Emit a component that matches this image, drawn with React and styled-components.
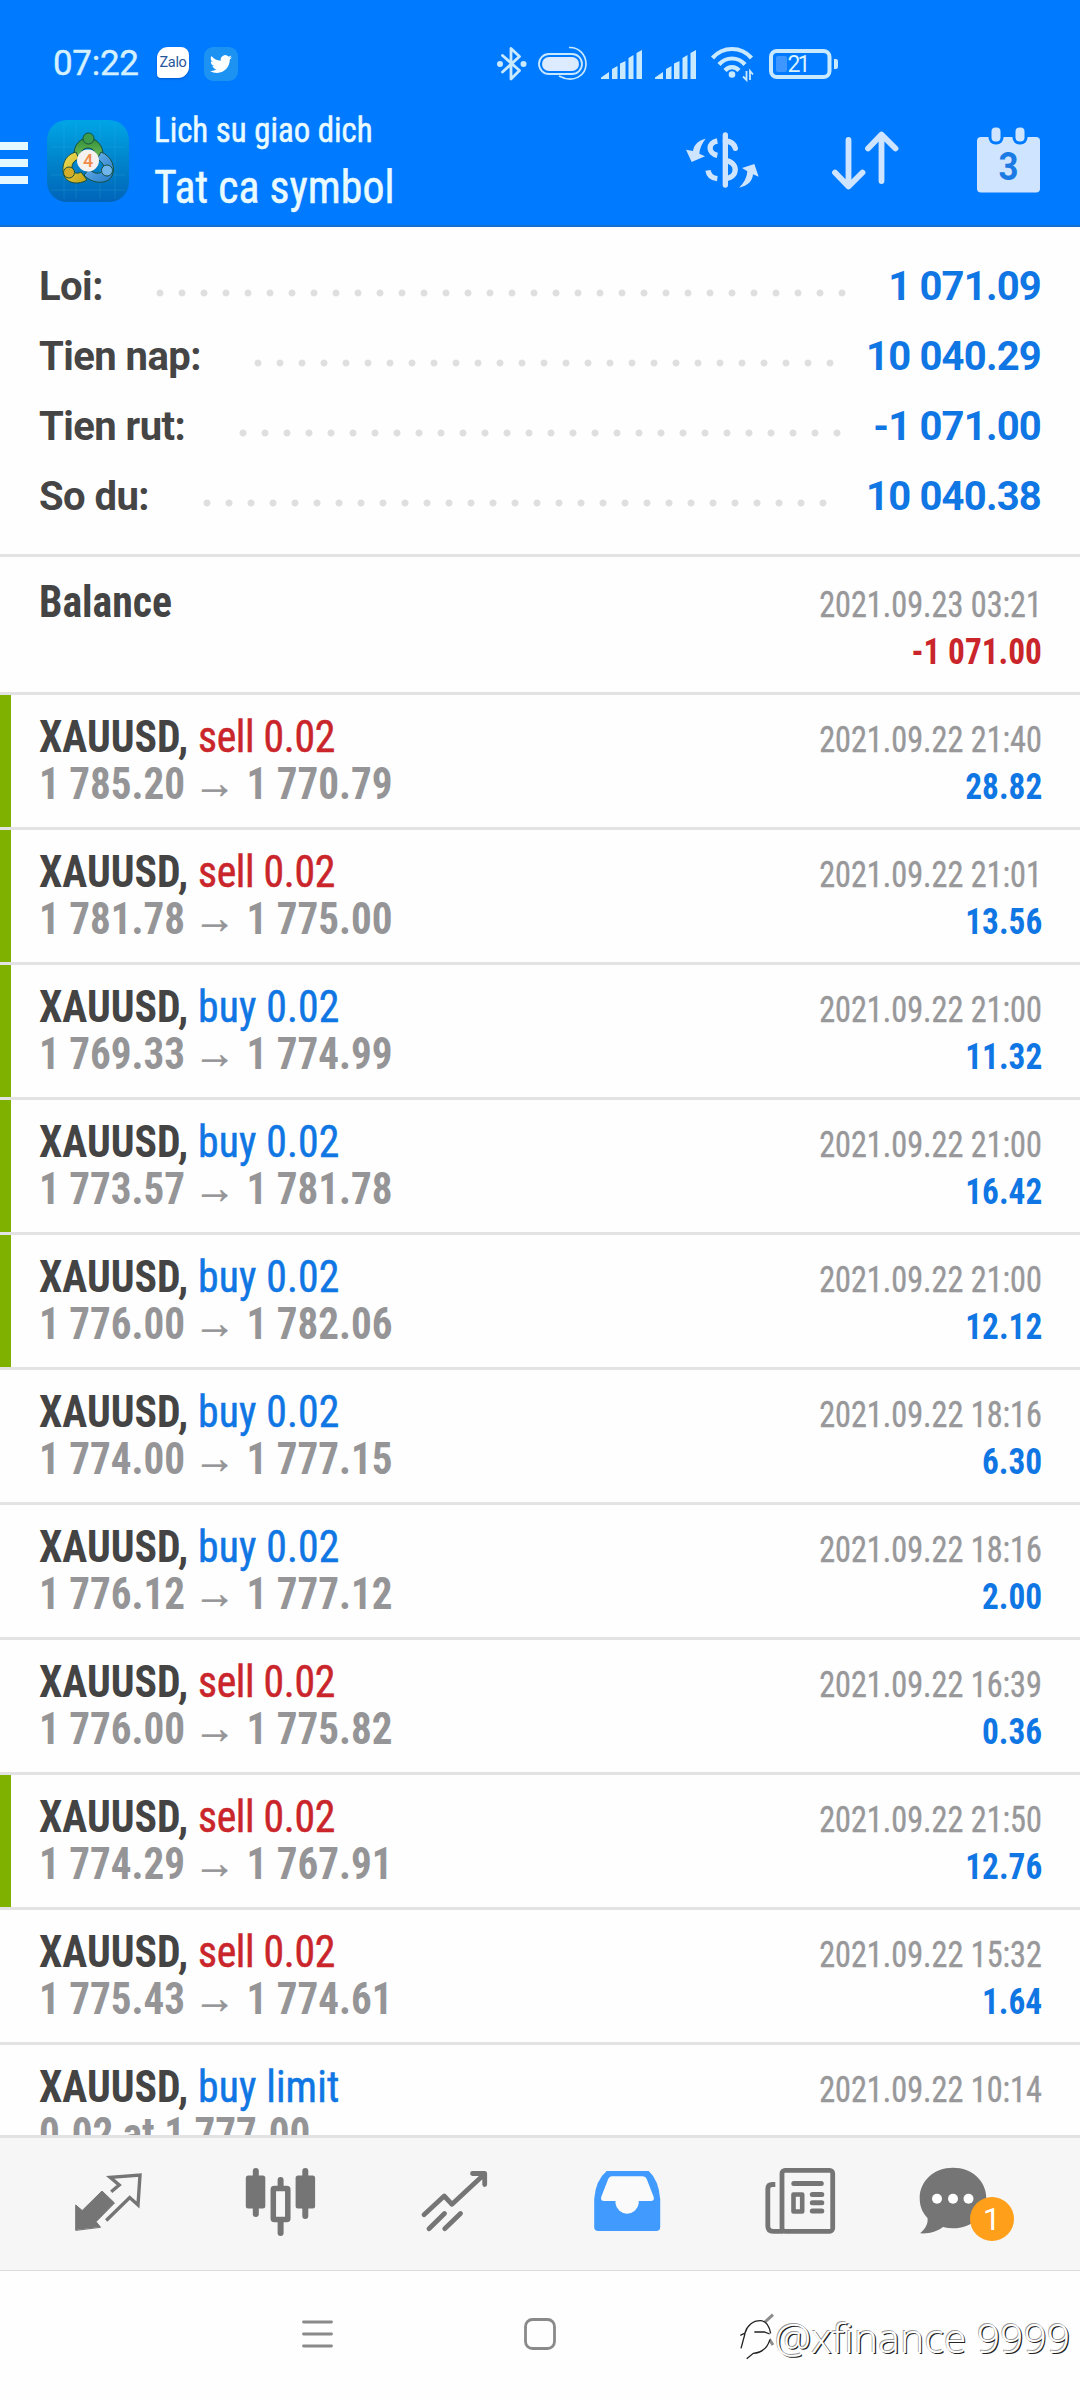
import React from 'react';
import styled, { createGlobalStyle } from 'styled-components';

const GlobalStyle = createGlobalStyle`
  * { box-sizing: border-box; }
  body { margin: 0; background: #fff; }
  svg { display: block; flex: none; overflow: visible; }
`;

const sans = "Roboto, 'Open Sans', sans-serif";
const condensed = "'Roboto Condensed', Roboto, sans-serif";
const blue = '#0f76e3';
const red = '#c9252b';

const Screen = styled.div`
  width: 1080px;
  height: 2400px;
  display: flex;
  flex-direction: column;
  overflow: hidden;
  background: #fefefe;
  font-family: ${condensed};
  white-space: pre;
`;

/* ---------- header ---------- */
const Header = styled.header`
  height: 227px;
  flex: none;
  background: #007aff;
  border-bottom: 2px solid #1470cf;
`;
const StatusBar = styled.div`
  height: 100px;
  padding: 28px 0 0 53px;
  display: flex;
  align-items: center;
`;
const Clock = styled.span`
  width: 104px;
  font: 400 35px/40px ${sans};
  letter-spacing: -0.3px;
  color: #d5f1ff;
  -webkit-text-stroke: 0.4px;
`;
const NoticeIcons = styled.div`
  display: flex;
  align-items: center;
  gap: 15px;
  width: 340px;
`;
const ZaloBubble = styled.div`
  width: 32px;
  height: 31px;
  margin-top: -4px;
  border-radius: 11px 8px 11px 4px;
  background: #fff;
  box-shadow: 0 1px 2px #0058c8;
  font: 400 14.5px/31px ${sans};
  letter-spacing: -0.3px;
  text-align: center;
  color: #27569b;
`;
const TwitterTile = styled.div`
  width: 34px;
  height: 34px;
  border-radius: 9px;
  background: #1c92f2;
  display: flex;
  align-items: center;
  justify-content: center;
`;
const SystemIcons = styled.div`
  display: flex;
  align-items: center;
`;
const Gap = styled.i`
  width: ${(p) => p.$w}px;
`;

const Toolbar = styled.div`
  height: 125px;
  display: flex;
  align-items: center;
`;
const Burger = styled.div`
  width: 28px;
  display: grid;
  gap: 9px;
  margin-right: 19px;
`;
const BurgerLine = styled.i`
  height: 8px;
  background: #e4f8ff;
`;
const LogoBox = styled.div`
  margin-bottom: 3px;
`;
const Titles = styled.div`
  flex: 1;
  align-self: flex-start;
  padding: 3px 0 0 25px;
`;
const TitleLine = styled.div`
  font-size: ${(p) => p.$size}px;
  line-height: 56px;
  color: #e9fbff;
  -webkit-text-stroke: 0.5px;
  transform: scaleX(${(p) => p.$scale});
  transform-origin: left;
`;
const Actions = styled.div`
  display: flex;
  align-items: center;
  padding-right: 40px;
  margin-bottom: 5px;
`;

/* ---------- summary ---------- */
const Summary = styled.section`
  height: 330px;
  flex: none;
  padding: 25px 39px 0 39px;
  border-bottom: 3px solid #e3e3e3;
`;
const SummaryRow = styled.div`
  height: 70px;
  display: flex;
  font: 700 40px/70px ${sans};
  letter-spacing: -0.8px;
`;
const SummaryLabel = styled.span`
  color: #454545;
  letter-spacing: -0.55px;
`;
const Leader = styled.span`
  flex: 1;
  margin: 0 19px 0 46.5px;
`;
const Dots = styled.i`
  display: block;
  height: 8px;
  margin-top: 37px;
  width: round(down, 100%, 22px);
  background: radial-gradient(circle at 11px 4px, #dfdfdf 3px, transparent 3.9px) 0 0 / 22px 8px repeat-x;
`;
const SummaryValue = styled.span`
  color: ${blue};
`;

/* ---------- history ---------- */
const History = styled.main`
  flex: 1;
  min-height: 0;
  overflow: hidden;
`;
const Row = styled.article`
  height: ${(p) => (p.$tall ? 138 : 135)}px;
  display: flex;
  border-bottom: 3px solid #e3e3e3;
`;
const Marker = styled.i`
  width: 11px;
  background: ${(p) => (p.$on ? '#7fb200' : 'transparent')};
`;
const RowBody = styled.div`
  flex: 1;
  padding: ${(p) => (p.$tall ? 21 : 18)}px 38px 0 28px;
`;
const Line = styled.div`
  height: 48px;
  line-height: 48px;
  display: flex;
  justify-content: space-between;
  align-items: baseline;
`;
const Deal = styled.span`
  font-size: 44px;
  font-weight: 700;
  color: #444;
  transform: scaleX(0.948);
  transform-origin: left;
`;
const Side = styled.span`
  font-weight: 400;
  letter-spacing: ${(p) => (p.$sell ? '-0.35px' : '0.15px')};
  color: ${(p) => (p.$sell ? red : blue)};
  -webkit-text-stroke: 0.5px;
`;
const Prices = styled.span`
  font-size: 43.5px;
  font-weight: 700;
  color: #959597;
  transform: scaleX(0.945);
  transform-origin: left;
`;
const Arrow = styled.span`
  font: 400 45px/1 'Liberation Sans', sans-serif;
  line-height: 0;
  vertical-align: 1px;
  margin: 0 11px 0 9px;
  -webkit-text-stroke: 0.5px;
`;
const Stamp = styled.span`
  font-size: 36px;
  color: #98989a;
  -webkit-text-stroke: 0.4px;
  transform: scaleX(0.895);
  transform-origin: right;
`;
const Profit = styled.span`
  font-size: 36px;
  font-weight: 700;
  color: ${(p) => (p.$loss ? red : blue)};
  transform: scaleX(0.925);
  transform-origin: right;
`;

/* ---------- bottom bars ---------- */
const TabBar = styled.nav`
  height: 136px;
  flex: none;
  padding: 0 18.5px 0 21.5px;
  display: grid;
  grid-template-columns: repeat(6, 1fr);
  background: #f6f6f6;
  border-top: 3px solid #e2e2e2;
  border-bottom: 1px solid #dcdcdc;
`;
const Tab = styled.div`
  position: relative;
  display: flex;
  align-items: center;
  justify-content: center;
`;
const Badge = styled.span`
  position: absolute;
  left: 81.5px;
  top: 59px;
  width: 44px;
  height: 44px;
  border-radius: 50%;
  background: #ff9f1a;
  color: #fff;
  font: 400 32px/45px ${sans};
  text-align: center;
`;
const SystemNav = styled.footer`
  height: 129px;
  flex: none;
  padding: 0 10px 4px 302px;
  display: flex;
  align-items: center;
`;
const Watermark = styled.div`
  flex: 1;
  display: flex;
  align-items: center;
  justify-content: flex-end;
  padding-top: 6px;
`;
const Handle = styled.span`
  font: 300 41px/56px 'Noto Sans', 'Open Sans', sans-serif;
  letter-spacing: -0.1px;
  color: #fff;
  text-shadow: 1.2px 1.2px 0.4px #222, -0.7px -0.7px 0.3px #999;
`;

const S = '#c9e9ff';

const Bluetooth = () => (
  <svg width="30" height="36" viewBox="0 0 30 36" fill="none" stroke={S} strokeWidth="2.8" strokeLinejoin="round" strokeLinecap="round">
    <path d="M5.500 9.500L22.500 24.500L14 33V2.500L22.500 10.500L5.500 26" />
    <circle cx="3" cy="18" r="1.600" fill={S} /><circle cx="26.500" cy="18" r="1.600" fill={S} />
  </svg>
);
const Vibrate = () => (
  <svg width="50" height="36" viewBox="0 0 50 36" fill="none" stroke={S}>
    <rect x="1" y="8" width="43" height="20" rx="10" strokeWidth="1.800" />
    <rect x="4" y="11" width="37" height="14" rx="7" fill="#dcebff" stroke="none" />
    <path d="M31 1.500C41 1 48 9 48 18C48 29 36 38 21 30" strokeWidth="1.700" />
  </svg>
);
const Signal = () => (
  <svg width="41" height="29" viewBox="0 0 41 29" fill={S}>
    <path d="M0 29V27.500L8 22V29ZM11 29V19L16.500 16V29ZM19 29V13.500L24.500 11V29ZM27.500 29V8L32.500 5V29ZM35.500 29V3L41 0V29Z" />
  </svg>
);
const Wifi = () => (
  <svg width="42" height="34" viewBox="0 0 42 34" fill="none" stroke={S} strokeWidth="4.200">
    <path d="M1.500 11C12 -1 30 -1 40.500 11" /><path d="M8 17.500C15 9.500 27 9.500 34 17.500" /><path d="M14 23.500C18 19 24 19 28 23.500" />
    <circle cx="21" cy="27.500" r="3.300" fill={S} stroke="none" />
    <path d="M35.500 24V33L32 29.500M39 33V24L42 27.500" strokeWidth="1.800" />
  </svg>
);
const Battery = () => (
  <svg width="69" height="30" viewBox="0 0 69 30">
    <rect x="2" y="2" width="58.500" height="26" rx="6" fill="none" stroke={S} strokeWidth="4" />
    <rect x="7" y="7" width="11" height="16" rx="2" fill="#3d97ff" />
    <path d="M65 10h2q2 0 2 3v4q0 3-2 3h-2z" fill={S} />
    <text x="18.500" y="23.300" fontFamily="Roboto" fontSize="23" textLength="23" fill="#d8f3ff">21</text>
  </svg>
);
const Bird = () => (
  <svg width="22" height="22" viewBox="0 0 24 24" fill="#fff">
    <path d="M23.950 4.600a10 10 0 0 1-2.820.770 4.900 4.900 0 0 0 2.160-2.720 9.900 9.900 0 0 1-3.120 1.190 4.920 4.920 0 0 0-8.380 4.480A14 14 0 0 1 1.640 3.160a4.920 4.920 0 0 0 1.520 6.570 4.900 4.900 0 0 1-2.230-.61v.06a4.920 4.920 0 0 0 3.950 4.830 5 5 0 0 1-2.210.080 4.940 4.940 0 0 0 4.600 3.420A9.870 9.870 0 0 1 0 19.540a14 14 0 0 0 7.550 2.210c9.050 0 14-7.500 14-13.980 0-.21 0-.42-.02-.63a10 10 0 0 0 2.460-2.550z" />
  </svg>
);
const AppLogo = () => (
  <svg width="82" height="82" viewBox="0 0 82 82">
    <defs>
      <linearGradient id="bg" x2="0" y2="1"><stop offset="0" stopColor="#00a5e6" /><stop offset=".5" stopColor="#0084cb" /><stop offset="1" stopColor="#0064b8" /></linearGradient>
      <linearGradient id="gr" x2="0" y2="1"><stop offset="0" stopColor="#2f8f38" /><stop offset="1" stopColor="#7cc05c" /></linearGradient>
      <linearGradient id="ye" x2="1" y2="1"><stop offset="0" stopColor="#efe05a" /><stop offset="1" stopColor="#c2a013" /></linearGradient>
      <linearGradient id="bl" x2="1" y2="1"><stop offset="0" stopColor="#79bdf0" /><stop offset="1" stopColor="#2278c8" /></linearGradient>
    </defs>
    <rect width="82" height="82" rx="20" fill="url(#bg)" />
    <path d="M4 27H78M4 55H78M4 70H78M17 3V79M29 3V79M53 3V79M68 3V79" stroke="#3fb6e8" strokeOpacity=".2" />
    <g stroke="#17503f" strokeWidth="1">
      <path d="M27 37C26 24 34 18 41 18S57 24 56 37L49 40C50 32 46 28 41 28S32 32 33 40Z" fill="url(#gr)" />
      <path d="M29 32C17 35 14 47 17 56C21 64 32 65 40 60L34 52C29 55 25 52 25 47C25 43 28 40 32 39Z" fill="url(#ye)" />
      <path d="M54 32C65 36 69 48 65 56C60 65 45 64 37 55L42 49C47 54 53 55 56 50C58 45 55 42 50 39Z" fill="url(#bl)" />
      <circle cx="41.500" cy="18.500" r="5.500" fill="#3c9c4c" /><circle cx="22" cy="52.500" r="5.500" fill="#d3ad27" /><circle cx="60" cy="50.500" r="5.500" fill="#6fb4ea" />
    </g>
    <circle cx="41" cy="40.500" r="11" fill="#f5f1ee" />
    <text x="41" y="47" textAnchor="middle" fontFamily="Roboto" fontWeight="500" fontSize="18" fill="#f08a4b">4</text>
  </svg>
);
const A = '#cfe5ff';
const DollarCycle = () => (
  <svg width="73" height="58" viewBox="47 31 219 174" fill="none" stroke={A} strokeWidth="16">
    <g fill={A} stroke="none">
      <path d="M106 54C84 59 70 73 68 91L47 87L64 124L104 107L87 99C88 83 95 68 106 54Z" />
      <path d="M206 201C233 196 247 180 248 161L265 168L252 130L215 142L231 152C229 173 220 188 206 201Z" />
    </g>
    <path d="M141 61C112 66 112 98 141 104" />
    <path d="M113 149C115 163 125 172 141 174" />
    <path d="M165 61C180 62 192 70 195 83" strokeLinecap="round" />
    <path d="M165 120C203 122 206 170 165 174" />
    <path d="M165 43V193" strokeLinecap="round" />
  </svg>
);
const Sort = () => (
  <svg width="68" height="60" viewBox="831 130 68 60" fill="none" stroke={A} strokeWidth="5.800" strokeLinecap="round" strokeLinejoin="round">
    <path d="M848.500 140V186M835 172.500L848.500 186.500L862.500 172.500M881.500 181V135M868 148.500L881.500 134.500L895.500 148.500" />
  </svg>
);
const Calendar = () => (
  <svg width="63" height="66" viewBox="977 127 63 66">
    <rect x="977" y="137" width="63" height="55.500" rx="4" fill={A} />
    <rect x="988.500" y="122" width="15" height="22.500" rx="7" fill="#007aff" /><rect x="1012.500" y="122" width="15" height="22.500" rx="7" fill="#007aff" />
    <rect x="991.500" y="127.500" width="9" height="14" rx="4" fill={A} /><rect x="1015.500" y="127.500" width="9" height="14" rx="4" fill={A} />
    <text x="1008.500" y="180" textAnchor="middle" fontFamily="Roboto" fontWeight="700" fontSize="38" textLength="20" lengthAdjust="spacingAndGlyphs" fill="#1b7ae3">3</text>
  </svg>
);

const G = '#757575';
const TabIcon = ({ x, children }) => (
  <svg width="120" height="88" viewBox={`${x} 2160 120 88`} fill="none" stroke={G} strokeLinecap="round" strokeLinejoin="round">{children}</svg>
);
const tabIcons = [
  <TabIcon x={48.3}>
    <path d="M76 2230V2205L82.500 2210.500L102.300 2191L114.800 2203L96.400 2221.700L100.600 2227Z" fill={G} strokeWidth="1" />
    <path d="M111.500 2191.800L119.500 2185L110.500 2177.300L140.300 2175L138.300 2205L130 2197.500L106.500 2220.500" strokeWidth="3.400" strokeLinecap="butt" strokeLinejoin="miter" />
  </TabIcon>,
  <TabIcon x={221.7}>
    <g fill={G} stroke="none"><rect x="246.500" y="2175.500" width="19.500" height="33" rx="2.500" /><rect x="296.300" y="2175.500" width="19.500" height="33" rx="2.500" /></g>
    <rect x="274" y="2188.500" width="14.500" height="31" rx="1" strokeWidth="5.500" />
    <path d="M256.500 2171V2214M306 2171V2216M281.300 2180V2187M281.300 2221V2233" strokeWidth="6" />
  </TabIcon>,
  <TabIcon x={395}>
    <path d="M424 2214.700L444.200 2196L452 2204.300L484 2174.500M472.500 2173.500H484.700V2184.500M429 2228.700L444.500 2213.500M444.700 2228.700L460.500 2213.500" strokeWidth="4.800" />
  </TabIcon>,
  <TabIcon x={568.3}>
    <path d="M607 2171H649Q659 2180 660.500 2199V2227Q660.500 2231 656.500 2231H598.500Q594.500 2231 594.500 2227V2199Q596 2180 607 2171Z" fill="#419bff" stroke="none" />
    <path d="M612 2176.300H643Q646 2176.300 647 2179L654 2197Q655 2201 651 2201H639V2203.500A11.700 11.700 0 0 1 615.800 2203.500V2201H604.500Q600.500 2201 601.500 2197L608.500 2179Q609.500 2176.300 612 2176.300Z" fill="#fafafa" stroke="none" />
  </TabIcon>,
  <TabIcon x={741.7}>
    <rect x="782.700" y="2170.300" width="50.700" height="61" rx="3" strokeWidth="4.800" />
    <path d="M776 2184.500H773Q768.500 2184.500 768.500 2189V2226Q768.500 2231.300 774 2231.300H784" strokeWidth="4.800" strokeLinecap="butt" />
    <path d="M794.500 2183.500H822M813 2194.500H822.500M813 2202.700H822.500M813 2211H822.500" strokeWidth="5" />
    <rect x="794.200" y="2194.500" width="8.700" height="17" strokeWidth="4.600" />
  </TabIcon>,
  <TabIcon x={915}>
    <path d="M953 2167.700C972 2167.700 986.300 2181 986.300 2198S972 2228.300 953 2228.300Q948 2228.300 943 2227C937 2231.500 929 2234 920 2233.300C925 2229 928.500 2224 927.500 2218C922 2212 919.700 2206 919.700 2198C919.700 2181 934 2167.700 953 2167.700Z" fill={G} stroke="none" />
    <g fill="#fff" stroke="none"><circle cx="937" cy="2198.700" r="5" /><circle cx="953" cy="2198.700" r="5" /><circle cx="968.500" cy="2198.700" r="5" /></g>
  </TabIcon>,
];

const RecentsGlyph = () => (
  <svg width="31" height="28" viewBox="0 0 31 28" stroke="#8a8a8a" strokeWidth="2.800" strokeLinecap="round"><path d="M1.500 2H29.500M1.500 14H29.500M1.500 26H29.500" /></svg>
);
const HomeGlyph = () => (
  <svg width="32" height="32" viewBox="0 0 32 32" fill="none" stroke="#8a8a8a" strokeWidth="2.800"><rect x="1.500" y="1.500" width="29" height="29" rx="7" /></svg>
);
const BirdMark = () => (
  <svg width="36" height="48" viewBox="32 25 108 144" fill="none" stroke="#222" strokeWidth="4">
    <path d="M134 30L108 54M110 84L134 121" stroke="#8c8c8c" strokeWidth="9" />
    <path d="M50 87C56 62 74 48 96 48C112 48 122 60 127 86L125 104C118 128 100 144 75 146L50 120Z" fill="#fefefe" stroke="none" />
    <path d="M36 92L50 85C56 62 74 48 96 48C112 48 122 60 127 86M50 87L38 131M78 82H108L124 88M125 104C118 128 100 144 75 146L55 162" />
  </svg>
);

const summary = [
  ['Loi:', '1 071.09'],
  ['Tien nap:', '10 040.29'],
  ['Tien rut:', '-1 071.00'],
  ['So du:', '10 040.38'],
];
const deals = [
  ['sell 0.02', '1 785.20', '1 770.79', '2021.09.22 21:40', '28.82', true],
  ['sell 0.02', '1 781.78', '1 775.00', '2021.09.22 21:01', '13.56', true],
  ['buy 0.02', '1 769.33', '1 774.99', '2021.09.22 21:00', '11.32', true],
  ['buy 0.02', '1 773.57', '1 781.78', '2021.09.22 21:00', '16.42', true],
  ['buy 0.02', '1 776.00', '1 782.06', '2021.09.22 21:00', '12.12', true],
  ['buy 0.02', '1 774.00', '1 777.15', '2021.09.22 18:16', '6.30', false],
  ['buy 0.02', '1 776.12', '1 777.12', '2021.09.22 18:16', '2.00', false],
  ['sell 0.02', '1 776.00', '1 775.82', '2021.09.22 16:39', '0.36', false],
  ['sell 0.02', '1 774.29', '1 767.91', '2021.09.22 21:50', '12.76', true],
  ['sell 0.02', '1 775.43', '1 774.61', '2021.09.22 15:32', '1.64', false],
];

const DealRow = ({ side, prices, stamp, profit, marked }) => (
  <Row>
    <Marker $on={marked} />
    <RowBody>
      <Line>
        <Deal>XAUUSD, <Side $sell={side.startsWith('sell')}>{side}</Side></Deal>
        <Stamp>{stamp}</Stamp>
      </Line>
      <Line>
        <Prices>{prices}</Prices>
        {profit && <Profit>{profit}</Profit>}
      </Line>
    </RowBody>
  </Row>
);

export default function App() {
  return (
    <Screen>
      <GlobalStyle />
      <Header>
        <StatusBar>
          <Clock>07:22</Clock>
          <NoticeIcons>
            <ZaloBubble>Zalo</ZaloBubble>
            <TwitterTile><Bird /></TwitterTile>
          </NoticeIcons>
          <SystemIcons>
            <Bluetooth /><Gap $w={11} /><Vibrate /><Gap $w={13} />
            <Signal /><Gap $w={13} /><Signal /><Gap $w={15} />
            <Wifi /><Gap $w={15.5} /><Battery />
          </SystemIcons>
        </StatusBar>
        <Toolbar>
          <Burger><BurgerLine /><BurgerLine /><BurgerLine /></Burger>
          <LogoBox><AppLogo /></LogoBox>
          <Titles>
            <TitleLine $size={35} $scale={0.939}>Lich su giao dich</TitleLine>
            <TitleLine $size={46} $scale={0.952}>Tat ca symbol</TitleLine>
          </Titles>
          <Actions>
            <DollarCycle /><Gap $w={72.5} /><Sort /><Gap $w={78} /><Calendar />
          </Actions>
        </Toolbar>
      </Header>

      <Summary>
        {summary.map(([label, value]) => (
          <SummaryRow key={label}>
            <SummaryLabel>{label}</SummaryLabel>
            <Leader><Dots /></Leader>
            <SummaryValue>{value}</SummaryValue>
          </SummaryRow>
        ))}
      </Summary>

      <History>
        <Row $tall>
          <Marker />
          <RowBody $tall>
            <Line><Deal>Balance</Deal><Stamp>2021.09.23 03:21</Stamp></Line>
            <Line><Prices> </Prices><Profit $loss>-1 071.00</Profit></Line>
          </RowBody>
        </Row>
        {deals.map(([side, open, close, stamp, profit, marked], i) => (
          <DealRow
            key={i}
            side={side}
            prices={<>{open}<Arrow>→</Arrow>{close}</>}
            stamp={stamp}
            profit={profit}
            marked={marked}
          />
        ))}
        <DealRow side="buy limit" prices="0.02 at 1 777.00" stamp="2021.09.22 10:14" />
      </History>

      <TabBar>
        {tabIcons.map((icon, i) => (
          <Tab key={i}>
            {icon}
            {i === 5 && <Badge>1</Badge>}
          </Tab>
        ))}
      </TabBar>

      <SystemNav>
        <RecentsGlyph /><Gap $w={190.5} /><HomeGlyph />
        <Watermark><BirdMark /><Handle>@xfinance 9999</Handle></Watermark>
      </SystemNav>
    </Screen>
  );
}
